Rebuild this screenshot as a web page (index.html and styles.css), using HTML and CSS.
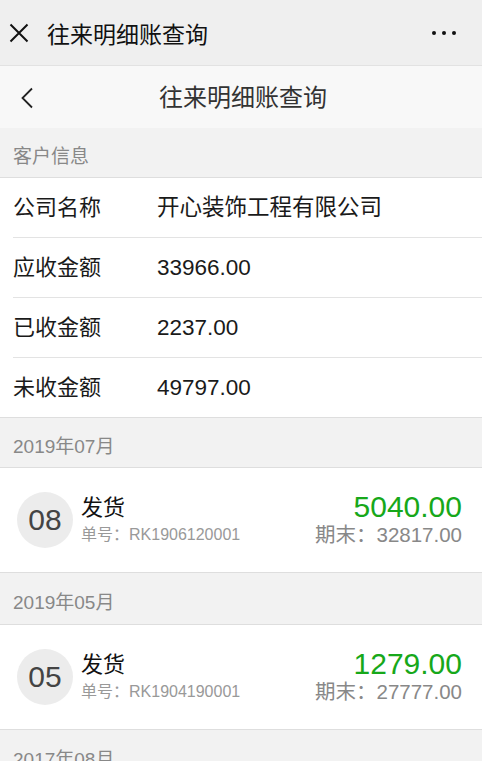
FILE: index.html
```html
<!DOCTYPE html>
<html lang="zh-CN">
<head>
<meta charset="utf-8">
<title>往来明细账查询</title>
<link rel="stylesheet" href="styles.css">
</head>
<body>
<div class="topbar">
  <svg class="close" width="20" height="20" viewBox="0 0 20 20"><path d="M1.5 1.5 L18.5 18.5 M18.5 1.5 L1.5 18.5" stroke="#111" stroke-width="2" fill="none"/></svg>
  <div class="top-title">往来明细账查询</div>
  <div class="dots"><span></span><span></span><span></span></div>
</div>
<div class="navbar">
  <svg class="back" width="14" height="22" viewBox="0 0 14 22"><path d="M12 1.5 L2.5 11 L12 20.5" stroke="#222" stroke-width="1.8" fill="none"/></svg>
  <div class="nav-title">往来明细账查询</div>
</div>
<div class="section-head">客户信息</div>
<div class="info">
  <div class="info-row"><span class="label">公司名称</span><span class="value">开心装饰工程有限公司</span></div>
  <div class="info-row"><span class="label">应收金额</span><span class="value">33966.00</span></div>
  <div class="info-row"><span class="label">已收金额</span><span class="value">2237.00</span></div>
  <div class="info-row"><span class="label">未收金额</span><span class="value">49797.00</span></div>
</div>
<div class="section-head">2019年07月</div>
<div class="card">
  <div class="day">08</div>
  <div class="mid"><div class="kind">发货</div><div class="no">单号：RK1906120001</div></div>
  <div class="right"><div class="amount">5040.00</div><div class="end">期末：32817.00</div></div>
</div>
<div class="section-head after-card">2019年05月</div>
<div class="card">
  <div class="day">05</div>
  <div class="mid"><div class="kind">发货</div><div class="no">单号：RK1904190001</div></div>
  <div class="right"><div class="amount">1279.00</div><div class="end">期末：27777.00</div></div>
</div>
<div class="section-head after-card">2017年08月</div>
</body>
</html>
```
FILE: styles.css
```css
html, body {
  margin: 0;
  padding: 0;
}
body {
  width: 482px;
  height: 761px;
  overflow: hidden;
  background: #f2f2f2;
  font-family: "Liberation Sans", "Noto Sans CJK SC", sans-serif;
  color: #1a1a1a;
}
.topbar {
  height: 66px;
  box-sizing: border-box;
  background: #efefef;
  border-bottom: 1px solid #e2e2e2;
  display: flex;
  align-items: center;
  padding: 0 26px 0 9px;
}
.close { flex: none; }
.top-title {
  margin-left: 18px;
  font-size: 23px;
  color: #111;
  flex: 1;
  font-family: "Noto Sans CJK SC", sans-serif;
  line-height: 30px;
}
.dots { display: flex; gap: 6px; }
.dots span {
  width: 4px; height: 4px; border-radius: 50%; background: #111;
}
.navbar {
  height: 62px;
  background: #f8f8f8;
  display: flex;
  align-items: center;
  position: relative;
  justify-content: center;
}
.back {
  position: absolute;
  left: 20px;
  top: 21px;
}
.nav-title {
  font-size: 24px;
  color: #333;
  font-family: "Noto Sans CJK SC", sans-serif;
  line-height: 30px;
  margin-top: -3px;
  margin-left: 4px;
}
.section-head {
  height: 50px;
  box-sizing: border-box;
  padding: 18px 13px 0;
  line-height: 22px;
  font-size: 19px;
  color: #888;
  border-bottom: 1px solid #dedede;
  background: #f2f2f2;
}
.section-head.after-card {
  height: 52px;
  padding-top: 19px;
}
.info {
  background: #fff;
  border-bottom: 1px solid #dedede;
}
.info-row {
  height: 59px;
  line-height: 59px;
  margin-left: 13px;
  border-bottom: 1px solid #e3e3e3;
  font-size: 22.5px;
  color: #1a1a1a;
  white-space: nowrap;
}
.info-row:last-child { border-bottom: none; }
.label { display: inline-block; width: 144px; font-size: 22px; }
.card {
  background: #fff;
  height: 105px;
  box-sizing: border-box;
  border-bottom: 1px solid #dedede;
  display: flex;
  align-items: center;
  padding: 0 20px 0 17px;
}
.day {
  width: 56px;
  height: 56px;
  border-radius: 50%;
  background: #ececec;
  color: #444;
  font-size: 30px;
  display: flex;
  align-items: center;
  justify-content: center;
  flex: none;
}
.mid {
  margin-left: 8px;
  flex: 1;
  margin-top: 1px;
}
.kind {
  font-size: 22px;
  line-height: 26px;
  color: #111;
}
.no {
  font-size: 16px;
  color: #999;
  line-height: 22px;
  margin-top: 3px;
}
.right {
  text-align: right;
  margin-top: 0;
}
.amount {
  font-size: 30px;
  line-height: 30px;
  color: #17a81a;
}
.end {
  font-size: 20.5px;
  line-height: 26px;
  color: #888;
}
```
